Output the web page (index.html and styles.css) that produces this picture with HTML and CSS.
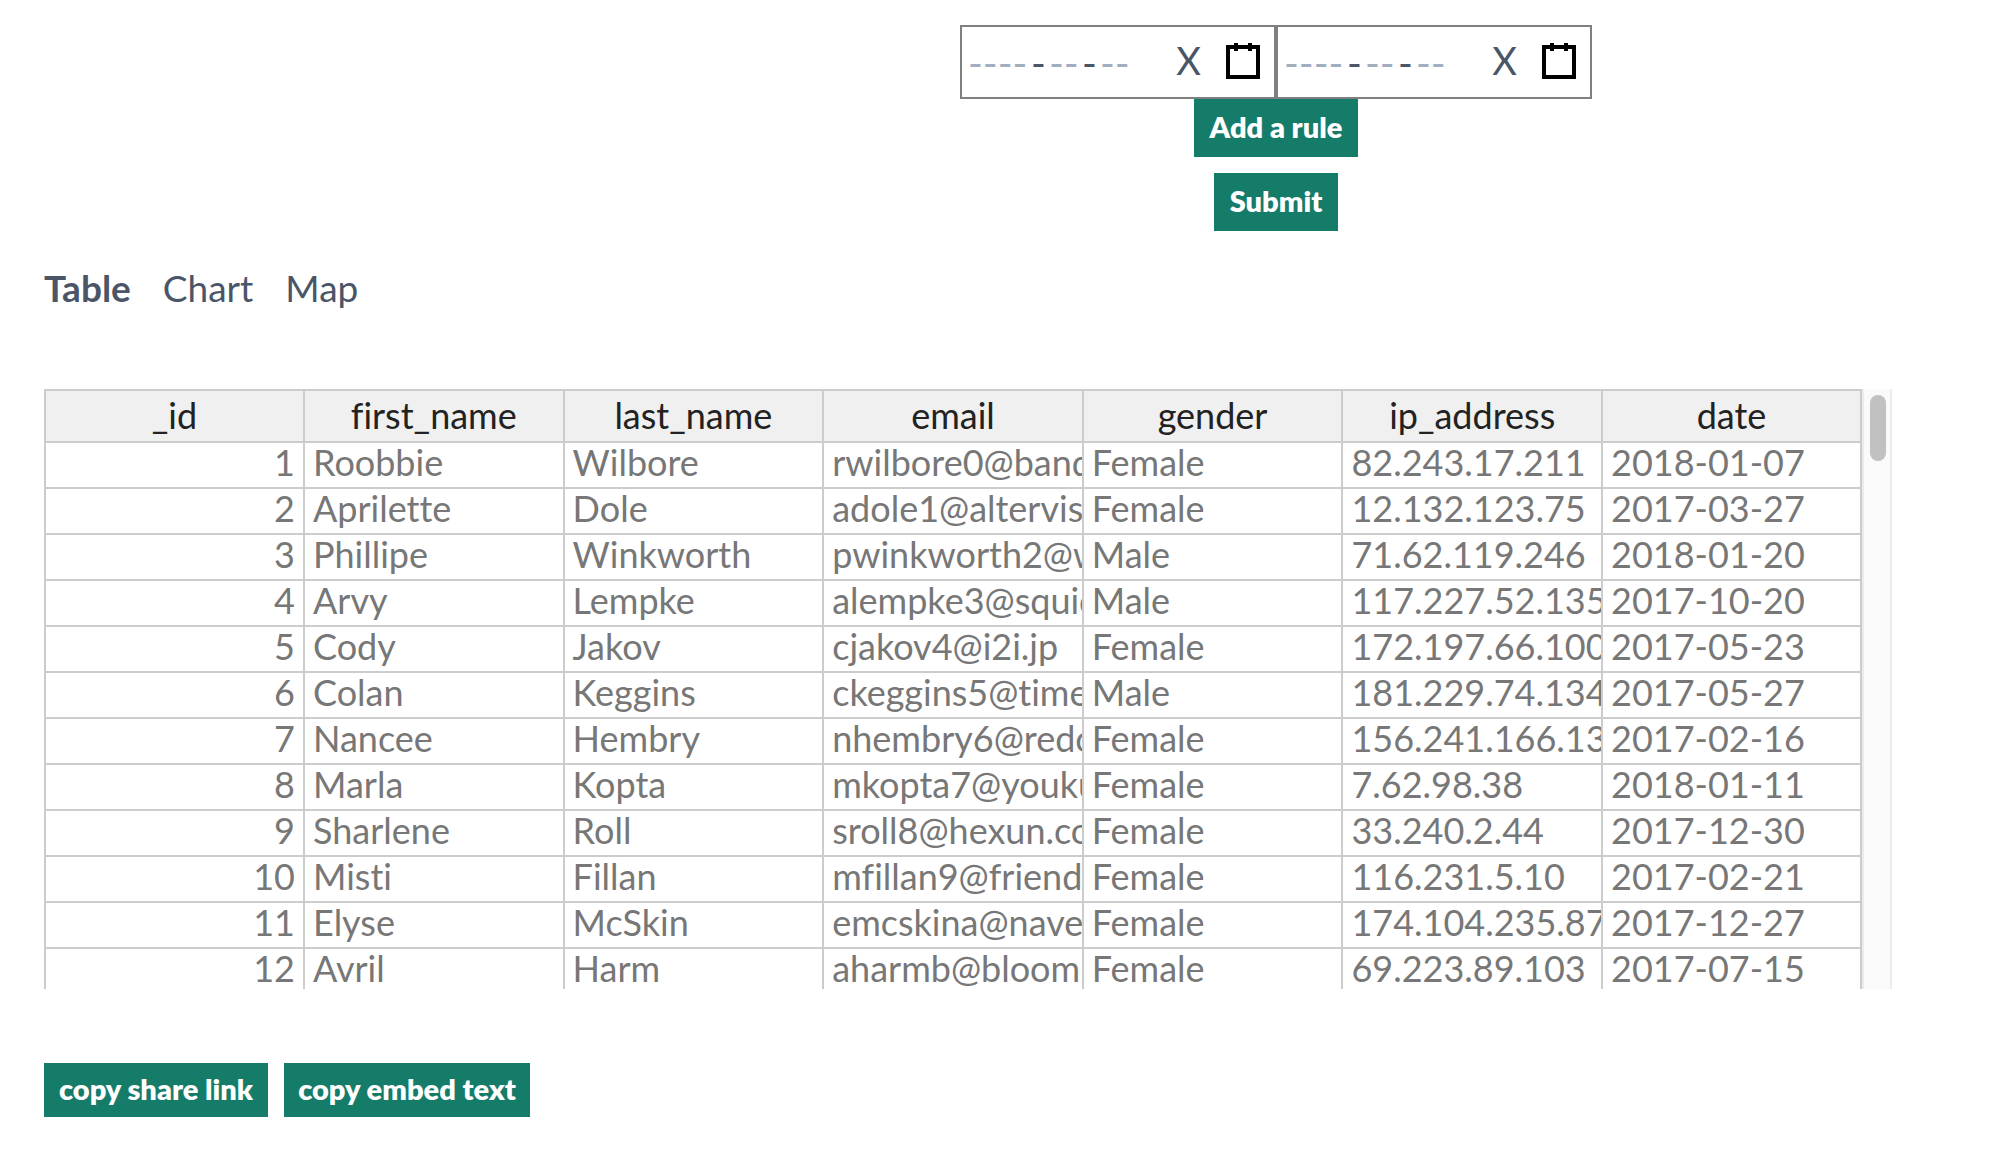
FILE: index.html
```html
<!DOCTYPE html>
<html lang="en">
<head>
<meta charset="utf-8">
<meta name="viewport" content="width=device-width, initial-scale=1">
<title>Data explorer</title>
<link rel="stylesheet" href="styles.css">
</head>
<body>
<main class="page">
  <form class="filters">
    <div class="date-range">
      <div class="date-picker">
        <div class="date-fields">
          <input class="date-input date-input-year" aria-label="Start year" placeholder="----"><span class="divider">-</span><input class="date-input" aria-label="Start month" placeholder="--"><span class="divider">-</span><input class="date-input" aria-label="Start day" placeholder="--">
        </div>
        <button type="button" class="clear" aria-label="Clear start date">X</button>
        <button type="button" class="calendar" aria-label="Open start calendar">
          <svg class="icon" viewBox="0 0 19 19" fill="none" stroke="#000" stroke-width="2"><rect x="2" y="2" width="15" height="15"/><path d="M6 0v4M13 0v4"/></svg>
        </button>
      </div>
      <div class="date-picker">
        <div class="date-fields">
          <input class="date-input date-input-year" aria-label="End year" placeholder="----"><span class="divider">-</span><input class="date-input" aria-label="End month" placeholder="--"><span class="divider">-</span><input class="date-input" aria-label="End day" placeholder="--">
        </div>
        <button type="button" class="clear" aria-label="Clear end date">X</button>
        <button type="button" class="calendar" aria-label="Open end calendar">
          <svg class="icon" viewBox="0 0 19 19" fill="none" stroke="#000" stroke-width="2"><rect x="2" y="2" width="15" height="15"/><path d="M6 0v4M13 0v4"/></svg>
        </button>
      </div>
    </div>
    <button type="button" class="btn btn-rule">Add a rule</button>
    <button type="submit" class="btn btn-submit">Submit</button>
  </form>

  <nav class="tabs">
    <a class="tab tab-active" href="#table">Table</a>
    <a class="tab" href="#chart">Chart</a>
    <a class="tab" href="#map">Map</a>
  </nav>

  <section class="data" id="table">
    <table class="grid">
      <thead>
        <tr><th class="edge">_id</th><th>first_name</th><th>last_name</th><th>email</th><th>gender</th><th>ip_address</th><th class="edge">date</th></tr>
      </thead>
      <tbody>
        <tr><td class="num">1</td><td>Roobbie</td><td>Wilbore</td><td>rwilbore0@bandcamp.com</td><td>Female</td><td>82.243.17.211</td><td>2018-01-07</td></tr>
        <tr><td class="num">2</td><td>Aprilette</td><td>Dole</td><td>adole1@altervista.org</td><td>Female</td><td>12.132.123.75</td><td>2017-03-27</td></tr>
        <tr><td class="num">3</td><td>Phillipe</td><td>Winkworth</td><td>pwinkworth2@webs.com</td><td>Male</td><td>71.62.119.246</td><td>2018-01-20</td></tr>
        <tr><td class="num">4</td><td>Arvy</td><td>Lempke</td><td>alempke3@squidoo.com</td><td>Male</td><td>117.227.52.135</td><td>2017-10-20</td></tr>
        <tr><td class="num">5</td><td>Cody</td><td>Jakov</td><td>cjakov4@i2i.jp</td><td>Female</td><td>172.197.66.100</td><td>2017-05-23</td></tr>
        <tr><td class="num">6</td><td>Colan</td><td>Keggins</td><td>ckeggins5@timesonline.co.uk</td><td>Male</td><td>181.229.74.134</td><td>2017-05-27</td></tr>
        <tr><td class="num">7</td><td>Nancee</td><td>Hembry</td><td>nhembry6@redcross.org</td><td>Female</td><td>156.241.166.13</td><td>2017-02-16</td></tr>
        <tr><td class="num">8</td><td>Marla</td><td>Kopta</td><td>mkopta7@youku.com</td><td>Female</td><td>7.62.98.38</td><td>2018-01-11</td></tr>
        <tr><td class="num">9</td><td>Sharlene</td><td>Roll</td><td>sroll8@hexun.com</td><td>Female</td><td>33.240.2.44</td><td>2017-12-30</td></tr>
        <tr><td class="num">10</td><td>Misti</td><td>Fillan</td><td>mfillan9@friendfeed.com</td><td>Female</td><td>116.231.5.10</td><td>2017-02-21</td></tr>
        <tr><td class="num">11</td><td>Elyse</td><td>McSkin</td><td>emcskina@naver.com</td><td>Female</td><td>174.104.235.87</td><td>2017-12-27</td></tr>
        <tr><td class="num">12</td><td>Avril</td><td>Harm</td><td>aharmb@bloomberg.com</td><td>Female</td><td>69.223.89.103</td><td>2017-07-15</td></tr>
      </tbody>
    </table>
    <div class="track"><div class="thumb"></div></div>
  </section>

  <div class="share">
    <button type="button" class="btn btn-share">copy share link</button>
    <button type="button" class="btn btn-embed">copy embed text</button>
  </div>
</main>
</body>
</html>
```
FILE: styles.css
```css
* { box-sizing: border-box; }

body {
  margin: 0;
  background: #fff;
  color: #4a5568;
  font-family: Lato, "Noto Sans", sans-serif;
  font-size: 36px;
  line-height: 54px;
}

button, input { font: inherit; color: inherit; }

button { border: 0; background: none; padding: 0; }

.page { padding: 25px 110px 50px 44px; }

/* Filters fill the right two thirds of the page */
.filters {
  margin-left: calc(100% / 3);
  display: flex;
  flex-direction: column;
  align-items: center;
}

.date-range { display: flex; }

.date-picker {
  display: flex;
  align-items: center;
  width: 316px;
  height: 74px;
  border: 2px solid #808080;
  padding: 0 12px 0 4px;
}

.date-fields {
  display: flex;
  align-items: center;
  flex: 1;
  padding-top: 2px;
  font-size: 40px;
}

.date-input {
  width: 34px;
  height: 54px;
  border: 0;
  padding: 0 2px;
  background: none;
}

.date-input-year { width: 64px; }
.date-input::placeholder { color: #a0aec0; opacity: 1; }
.divider { width: 17px; text-align: center; }
.clear { width: 47px; padding-bottom: 4px; font-size: 38px; }

.calendar {
  display: flex;
  width: 38px;
  margin-left: 12px;
}

.icon { width: 38px; height: 38px; display: block; }

.btn {
  height: 58px;
  padding-bottom: 2px;
  background: #167c6a;
  color: #fff;
  font-size: 29px;
  font-weight: 800;
  line-height: 42px;
  white-space: nowrap;
}

.btn-rule { width: 164px; margin-bottom: 16px; }
.btn-submit { width: 124px; }

.tabs { display: flex; gap: 32px; margin-top: 30px; font-size: 37px; }
.tab { color: inherit; text-decoration: none; }
.tab-active { font-weight: 700; }

.data {
  display: grid;
  grid-template-columns: 1fr 30px;
  height: 600px;
  margin-top: 74px;
  overflow: hidden;
}

.grid {
  width: 100%;
  table-layout: fixed;
  border-collapse: collapse;
  align-self: start;
  font-variant-ligatures: none;
}

.grid th, .grid td {
  border: 2px solid #ccc;
  overflow: hidden;
  white-space: nowrap;
}

.grid th {
  height: 52px;
  padding: 0 8px 2px;
  background: #f0f0f0;
  color: #222;
  font-weight: 400;
  line-height: 48px;
}

.grid .edge { width: 259px; }

.grid td {
  height: 46px;
  padding: 0 8px 6px;
  color: #777;
  line-height: 38px;
}

.grid .num { text-align: right; }

.track {
  background: #fafafa;
  border: solid #ebebeb;
  border-width: 0 2px;
  padding: 6px;
}

.thumb {
  width: 16px;
  height: 66px;
  border-radius: 8px;
  background: #c1c1c1;
}

.share { display: flex; gap: 16px; margin-top: 74px; }
.share .btn { height: 54px; }
.btn-share { width: 224px; }
.btn-embed { width: 246px; }
```
